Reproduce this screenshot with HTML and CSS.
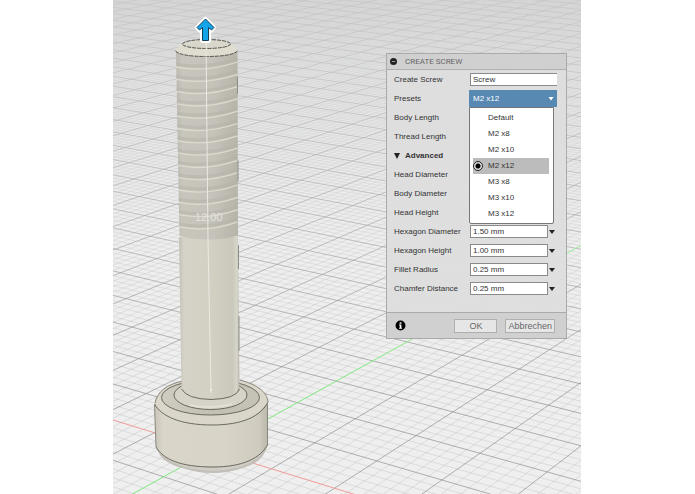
FILE: index.html
```html
<!DOCTYPE html>
<html lang="en">
<head>
<meta charset="utf-8">
<title>Create Screw</title>
<link rel="stylesheet" href="styles.css">
</head>
<body>
<main class="page">
  <section class="viewport">
    <svg class="scene" viewBox="113 0 468 494" preserveAspectRatio="xMidYMin slice" aria-hidden="true">
      <defs>
        <linearGradient id="floor" x1="0" y1="0" x2="0" y2="1">
          <stop offset="0" stop-color="#dadada"/><stop offset=".15" stop-color="#e4e4e4"/>
          <stop offset=".5" stop-color="#eeeeee"/><stop offset="1" stop-color="#efefef"/>
        </linearGradient>
        <linearGradient id="fade" x1="0" y1="0" x2="0" y2="1">
          <stop offset="0" stop-color="#fff" stop-opacity=".3"/><stop offset=".3" stop-color="#fff" stop-opacity=".6"/>
          <stop offset=".8" stop-color="#fff"/>
        </linearGradient>
        <mask id="distance" maskUnits="userSpaceOnUse" x="113" y="0" width="468" height="494">
          <rect x="113" width="468" height="494" fill="url(#fade)"/>
        </mask>
        <linearGradient id="shank" x1="0" y1="0" x2="1" y2="0">
          <stop offset="0" stop-color="#c3c1b5"/><stop offset=".08" stop-color="#d5d3c7"/>
          <stop offset=".5" stop-color="#d3d1c4"/><stop offset=".88" stop-color="#cac8bb"/>
          <stop offset=".96" stop-color="#d8d6ca"/><stop offset="1" stop-color="#b2b0a5"/>
        </linearGradient>
        <linearGradient id="thread" x1="0" y1="0" x2="1" y2="0">
          <stop offset="0" stop-color="#bbb9af"/><stop offset=".1" stop-color="#c7c5bc"/>
          <stop offset=".6" stop-color="#c4c2b9"/><stop offset="1" stop-color="#b7b5aa"/>
        </linearGradient>
        <linearGradient id="head" x1="0" y1="0" x2="1" y2="0">
          <stop offset="0" stop-color="#c9c6b9"/><stop offset=".08" stop-color="#d9d6c9"/>
          <stop offset=".6" stop-color="#d8d5c8"/><stop offset=".92" stop-color="#cfccbf"/>
          <stop offset="1" stop-color="#b9b6aa"/>
        </linearGradient>
        <linearGradient id="ring" x1="0" y1="0" x2="1" y2="0">
          <stop offset="0" stop-color="#cfccc1"/><stop offset=".5" stop-color="#c3bfb3"/>
          <stop offset="1" stop-color="#c5c2b6"/>
        </linearGradient>
      </defs>
      <rect x="113" width="468" height="494" fill="url(#floor)"/>
      <g id="grid" mask="url(#distance)"></g>

      <g class="screw">
        <path d="M157 448Q160 462 182 468Q213 478 243 468Q264 462 267 446Z" fill="#c1bfb8"/>
        <path d="M159 451Q171 469 213 471Q254 469 265 449Z" fill="#cfcdc5"/>
        <path d="M154.500 404C156 392 166 385 183 381Q211 375 240 380C258 385 267 392 268 402V445C262 458 243 467 213 467C180 467 160 458 156 447Z" fill="url(#head)"/>
        <path d="M155 403C157 392 167 384 183 381Q211 375 240 380C258 385 267 392 268 402C258 415 243 425 212 425C180 425 160 415 155 403Z" fill="#dbd6ca"/>
        <path class="rim" d="M155 403C157 392 167 384 183 381M240 380C258 385 267 392 268 402"/>
        <ellipse cx="210.500" cy="397.500" rx="49" ry="17.500" fill="url(#ring)" class="edge"/>
        <ellipse cx="210.500" cy="395" rx="36.500" ry="14.500" fill="#d6d3c8" class="edge"/>
        <path d="M190 405Q210 410 232 404" stroke="#e2dfd5" stroke-width="2" fill="none"/>
        <path class="edge" d="M154.500 404C161 416 180 425 212 425C243 425 261 416 268 402M156 447C163 459 180 467 213 467C243 467 261 458 268 444"/>
        <path class="rim" d="M154.500 404L156 447M267.500 402V445"/>
        <path d="M179 237H238L239.500 390Q236 399 211 399.500Q186 399 181.500 389Z" fill="url(#shank)"/>
        <path class="edge" d="M181.500 389Q187 399 211 399.500Q236 399 239.500 389"/>
        <path d="M176 52L179.500 236Q207 243 238 236L237.500 52Z" fill="url(#thread)"/>
        <g id="turns"></g>
        <path d="M175.500 51Q179 45 183 43Q206 37 230 43Q235 46 237.500 51Q231 56 206 56Q180 56 175.500 51Z" fill="#dfdcd0"/>
        <ellipse cx="206.500" cy="44" rx="24" ry="4.500" fill="#d9d7cc" class="dash"/>
        <path class="dash" d="M175.500 51Q181 56.500 206 56.500Q232 56.500 237.500 51"/>
        <path d="M237.500 77V94M238 160V181M238.500 245V269M239 316V351" stroke="#8d8e87" fill="none"/>
        <text x="195" y="221" class="measure">12.00</text>
        <path d="M206 40L208 240L211 393" stroke="#eceae3" fill="none"/>
        <circle cx="211" cy="390" r="1" fill="#f4f3ee"/>
      </g>
      <path id="arrow-halo" d="M205.500 19.500L213.500 27.500L211.500 30L208.500 27.500V40.500H202.500V27.500L199.500 30L197.500 27.500Z" fill="#fff" stroke="#fff" stroke-width="5" stroke-linejoin="round"/>
      <path d="M205.500 19L214 27.500L211.500 30L208.500 27.500V40.500H202.500V27.500L199.500 30L197 27.500Z" fill="#12a5ea" stroke="#173f55" stroke-linejoin="round"/>
    </svg>

    <form class="panel">
      <header class="panel-title">
        <svg class="collapse" viewBox="0 0 8 8" aria-hidden="true"><circle cx="4" cy="4" r="4" fill="#222"/><path d="M2 4H6" stroke="#aaa"/></svg>
        <h1>CREATE SCREW</h1>
      </header>
      <div class="fields">
        <div class="row"><label for="name">Create Screw</label><input id="name" class="name" value="Screw"></div>
        <div class="row">
          <label for="preset">Presets</label>
          <div class="preset">
            <select id="preset"><option>M2 x12</option></select>
            <svg class="caret" viewBox="0 0 6 4" aria-hidden="true"><path d="M.5 0H5.500L3 3.500Z" fill="#fff"/></svg>
            <div class="menu">
              <label><input type="radio" name="size">Default</label>
              <label><input type="radio" name="size">M2 x8</label>
              <label><input type="radio" name="size">M2 x10</label>
              <label><input type="radio" name="size" checked>M2 x12</label>
              <label><input type="radio" name="size">M3 x8</label>
              <label><input type="radio" name="size">M3 x10</label>
              <label><input type="radio" name="size">M3 x12</label>
            </div>
          </div>
        </div>
        <div class="row"><label for="bl">Body Length</label><input id="bl"></div>
        <div class="row"><label for="tl">Thread Length</label><input id="tl"></div>
        <h2 class="row group"><svg viewBox="0 0 6 6" aria-hidden="true"><path d="M0 0H6L3 6Z" fill="#222"/></svg>Advanced</h2>
        <div class="row"><label for="hd">Head Diameter</label><input id="hd"></div>
        <div class="row"><label for="bd">Body Diameter</label><input id="bd"></div>
        <div class="row"><label for="hh">Head Height</label><input id="hh"></div>
        <div class="row more"><label for="xd">Hexagon Diameter</label><input id="xd" value="1.50 mm"></div>
        <div class="row more"><label for="xh">Hexagon Height</label><input id="xh" value="1.00 mm"></div>
        <div class="row more"><label for="fr">Fillet Radius</label><input id="fr" value="0.25 mm"></div>
        <div class="row more"><label for="cd">Chamfer Distance</label><input id="cd" value="0.25 mm"></div>
      </div>
      <footer class="actions">
        <svg class="info" viewBox="0 0 10 10" aria-hidden="true"><circle cx="5" cy="5" r="4.500" fill="#000"/><path d="M4.200 2H5.800V3.300H4.200ZM3.700 4.200H5.800V7H6.400V8H3.700V7H4.300V5H3.700Z" fill="#fff"/></svg>
        <button type="button">OK</button>
        <button type="button">Abbrechen</button>
      </footer>
    </form>
  </section>
</main>
<script src="scene.js"></script>
</body>
</html>
```
FILE: styles.css
```css
* { box-sizing: border-box; }

body {
  margin: 0;
  background: #fff;
  color: #333;
  font: 8px/10px "Liberation Sans", Arial, sans-serif;
}

.page {
  display: grid;
  grid-template-columns: 113fr 468fr 114fr;
  min-height: 100vh;
}

.viewport {
  grid-column: 2;
  position: relative;
  display: flex;
  justify-content: flex-end;
  align-items: flex-start;
  padding: 53px 14px;
  overflow: hidden;
}

.scene {
  position: absolute;
  inset: 0;
  width: 100%;
  height: 100%;
}

.line { fill: none; }
.minor { stroke: #b4b8b8; stroke-opacity: .5; stroke-width: .7; }
.major { stroke: #888; stroke-opacity: .8; stroke-width: .8; }
.axis-red { stroke: #f09a9a; }
.axis-green { stroke: #7de87d; }
.edge { stroke: #5f5d55; stroke-width: .9; }
path.edge { fill: none; }
.rim { fill: none; stroke: #8a887e; }
.dash { stroke: #55534c; stroke-dasharray: 4 1; }
path.dash { fill: none; }
.turn { fill: none; stroke: #dddacf; stroke-width: 1.3; }
.shade { fill: none; stroke: #b3b1a7; stroke-opacity: .5; stroke-width: 3; }
.measure { fill: #e3e2dd; font-size: 11px; }

.panel {
  position: relative;
  width: 181px;
  border: 1px solid #aaa;
  background: rgba(222, 222, 222, .96);
}

.panel-title {
  display: flex;
  align-items: center;
  gap: 8px;
  height: 16px;
  padding-left: 3px;
  border-bottom: 1px solid #b0b0b0;
  background: #d0d0d0;
}

.collapse { width: 7px; height: 7px; }

h1 {
  margin: 0;
  color: #666;
  font: 8px/10px Roboto, sans-serif;
}

.fields { padding: 0 9px 14px 7px; }

.row {
  display: grid;
  grid-template-columns: 76px 78px 1fr;
  align-items: center;
  height: 19px;
}

.row input:not([type]) {
  width: 100%;
  height: 13px;
  padding: 0 2px;
  border: 1px solid #8a8a8a;
  border-radius: 0;
  background: #fff;
  color: #333;
  font: inherit;
}

.row input.name:not([type]) {
  grid-column: 2 / 4;
  border-right: 0;
}

.more::after {
  content: "";
  width: 0;
  margin-left: 1px;
  border: solid transparent;
  border-width: 4px 3px 0;
  border-top-color: #222;
}

.group {
  grid-template-columns: 6px 1fr;
  gap: 5px;
  margin: 0;
  font-size: 8px;
}

.group svg { width: 6px; }

.preset {
  grid-column: 2 / 4;
  position: relative;
  margin-left: -1px;
}

.preset select {
  display: block;
  width: 100%;
  height: 17px;
  padding: 0 4px;
  border: 0;
  border-radius: 0;
  appearance: none;
  background: #5889b3;
  color: #fff;
  font: inherit;
}

.caret {
  position: absolute;
  right: 3px;
  top: 7px;
  width: 6px;
}

.menu {
  position: absolute;
  top: 100%;
  left: 0;
  right: 3px;
  z-index: 1;
  padding: 2px 4px 1px 3px;
  border: 1px solid #777;
  border-radius: 0 0 2px 2px;
  background: #fff;
}

.menu label {
  display: flex;
  align-items: center;
  gap: 5px;
  height: 16px;
}

.menu label:has(:checked) { background: #bcbcbc; }

.menu input {
  appearance: none;
  width: 10px;
  height: 10px;
  margin: 0;
  border-radius: 50%;
}

.menu input:checked {
  border: 1px solid #222;
  background: radial-gradient(#000 0 2px, #ddd 3px);
}

.actions {
  display: flex;
  align-items: center;
  gap: 8px;
  height: 26px;
  padding: 0 11px 0 8px;
  border-top: 1px solid #aaa;
  background: #d0d0d0;
}

.info {
  width: 11px;
  margin-right: auto;
}

button {
  min-width: 43px;
  height: 14px;
  padding: 0 2px;
  border: 1px solid #b0b0b0;
  background: #e6e6e6;
  color: #666;
  font: 9px/10px "Liberation Sans", Arial, sans-serif;
}
```
FILE: scene.js
```js
const NS = "http://www.w3.org/2000/svg";

// Perspective floor: origin plus the vanishing points of both grid directions.
const origin = [211.4, 450.3];
const vanishU = [-2127, -270];
const vanishV = [1511, -270];
const scaleU = -0.025;
const scaleV = 0.03543;

function project(u, v) {
  const a = u * scaleU;
  const b = v * scaleV;
  const w = 1 + a + b;
  return [0, 1].map(i => ((origin[i] + a * vanishU[i] + b * vanishV[i]) / w).toFixed(2)).join(" ");
}

function addPath(parent, d, cls) {
  const path = document.createElementNS(NS, "path");
  path.setAttribute("d", d);
  path.setAttribute("class", cls);
  parent.append(path);
}

const grid = document.getElementById("grid");
const lines = { minor: "", major: "" };
for (let n = -300; n <= 300; n++) {
  if (n === 0) continue;
  const k = n / 5;
  const kind = n % 5 === 0 ? "major" : "minor";
  const nearV = Math.max(-15, (-0.8 - k * scaleU) / scaleV);
  const nearU = Math.min(12, (-0.8 - k * scaleV) / scaleU);
  if (k <= 12) lines[kind] += `M${project(k, nearV)}L${project(k, 90)}`;
  if (k >= -15) lines[kind] += `M${project(nearU, k)}L${project(-90, k)}`;
}
addPath(grid, lines.minor, "line minor");
addPath(grid, lines.major, "line major");
addPath(grid, `M${project(12, 0)}L${project(-60, 0)}`, "line axis-red");
addPath(grid, `M${project(0, -12)}L${project(0, 60)}`, "line axis-green");

// Thread turns down the upper part of the shank.
const turns = document.getElementById("turns");
for (let i = 0; i < 14; i++) {
  const y = 67 + i * 12.3;
  const left = 176 + i * 0.25;
  addPath(turns, `M${left} ${y - 3}Q${left + 26} ${y + 3} 237.500 ${y - 8}`, "shade");
  addPath(turns, `M${left} ${y}Q${left + 28} ${y + 6} 237.500 ${y - 5}`, "turn");
}
```
